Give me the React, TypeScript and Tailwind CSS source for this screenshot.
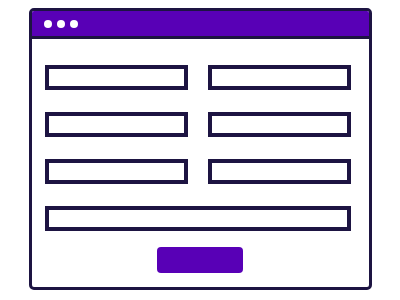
import React from 'react';

const Field: React.FC<{ wide?: boolean }> = ({ wide }) => (
  <div className={`h-[25px] border-[4px] border-[#1d1442] bg-white ${wide ? 'col-span-2' : ''}`} />
);

export default function App() {
  return (
    <div className="w-[400px] h-[300px] bg-white pt-[8px] pl-[29px]">
      {/* browser window */}
      <div className="w-[343px] h-[282px] border-[3px] border-[#1d1442] rounded-[5px] overflow-hidden flex flex-col bg-white">
        {/* title bar */}
        <div className="h-[28px] bg-[#5800b6] border-b-[3px] border-[#1d1442] flex items-center gap-[5px] pl-[12px] shrink-0">
          <span className="w-[8px] h-[8px] rounded-full bg-white" />
          <span className="w-[8px] h-[8px] rounded-full bg-white" />
          <span className="w-[8px] h-[8px] rounded-full bg-white" />
        </div>

        {/* form */}
        <div className="flex flex-col pl-[13px] pt-[26px]">
          <div className="grid grid-cols-[143px_143px] gap-x-[20px] gap-y-[22px]">
            <Field />
            <Field />
            <Field />
            <Field />
            <Field />
            <Field />
            <Field wide />
          </div>
          <div className="mt-[16px] ml-[112px] w-[86px] h-[26px] rounded-[4px] bg-[#5800b6]" />
        </div>
      </div>
    </div>
  );
}
